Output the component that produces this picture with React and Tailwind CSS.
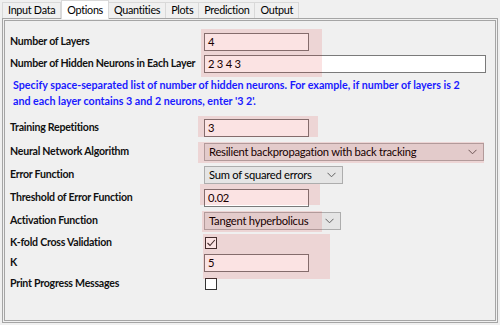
import React from "react";

// WinForms-like options tab with pink attention overlays
const TABS = ["Input Data", "Options", "Quantities", "Plots", "Prediction", "Output"];

const Chevron = () => (
  <svg width="9" height="6" viewBox="0 0 9 6" className="absolute right-[6px] top-1/2 -translate-y-1/2">
    <polyline points="0.5,0.8 4.5,4.8 8.5,0.8" fill="none" stroke="#606060" strokeWidth="1" />
  </svg>
);

const TextBox = ({ value, className }) => (
  <div className={"h-[18px] border border-[#7a7a7a] bg-white pl-[3px] flex items-center text-[11.2px] font-normal tracking-[-0.25px] text-black " + className}>
    {value}
  </div>
);

const Combo = ({ value, className }) => (
  <div className={"relative h-[18px] border border-[#adadad] bg-[#e5e5e5] pl-[4px] flex items-center text-[11.2px] font-normal tracking-[-0.25px] text-black " + className}>
    {value}
    <Chevron />
  </div>
);

const Check = ({ checked }) => (
  <div className="w-[12px] h-[12px] border border-[#333] bg-white flex items-center justify-center">
    {checked && (
      <svg width="10" height="10" viewBox="0 0 10 10">
        <polyline points="1.5,5 4,7.5 8.8,2" fill="none" stroke="#333" strokeWidth="1.1" />
      </svg>
    )}
  </div>
);

export default function App() {
  return (
    <div
      className="relative w-[500px] h-[325px] bg-[#f0f0f0] overflow-hidden"
      style={{ fontFamily: 'Lato, "Liberation Sans", sans-serif' }}
    >
      {/* tab strip */}
      <div className="flex items-end h-[18px] pl-[2px]">
        {TABS.map((t) =>
          t === "Options" ? (
            <div key={t} className="h-[19px] -mb-[1px] z-10 px-[5px] bg-white border border-b-0 border-[#d9d9d9] text-[10.8px] tracking-[-0.3px] text-black flex items-center whitespace-nowrap">
              {t}
            </div>
          ) : (
            <div key={t} className="h-[16px] px-[5px] bg-[#f0f0f0] border border-b-0 border-[#d9d9d9] -ml-[1px] first:ml-0 text-[10.8px] tracking-[-0.3px] text-black flex items-center whitespace-nowrap">
              {t}
            </div>
          )
        )}
      </div>

      {/* panel */}
      <div className="mx-[2px] h-[305px] border-[3px] border-double border-[#a5a5a5] bg-[#f0f0f0] pl-[5px] pt-[12px] text-[10.6px] tracking-[-0.25px] font-bold text-[#111] whitespace-nowrap">
        <div className="flex items-center h-[18px]">
          <div className="w-[194px]">Number of Layers</div>
          <TextBox value="4" className="w-[105px]" />
        </div>
        <div className="flex items-center h-[18px] mt-[4px]">
          <div className="w-[194px]">Number of Hidden Neurons in Each Layer</div>
          <TextBox value="2 3 4 3" className="w-[282px]" />
        </div>
        <div className="mt-[4px] pl-[3px] leading-[16px] text-[#1a1aff] text-[10.7px] tracking-normal">
          Specify space-separated list of number of hidden neurons. For example, if number of layers is 2
          <br />
          and each layer contains 3 and 2 neurons, enter '3 2'.
        </div>
        <div className="flex items-center h-[18px] mt-[10px]">
          <div className="w-[194px]">Training Repetitions</div>
          <TextBox value="3" className="w-[105px]" />
        </div>
        <div className="flex items-center h-[18px] mt-[6px]">
          <div className="w-[194px]">Neural Network Algorithm</div>
          <Combo value="Resilient backpropagation with back tracking" className="w-[280px]" />
        </div>
        <div className="flex items-center h-[18px] mt-[5px]">
          <div className="w-[194px]">Error Function</div>
          <Combo value="Sum of squared errors" className="w-[139px]" />
        </div>
        <div className="flex items-center h-[18px] mt-[5px]">
          <div className="w-[194px]">Threshold of Error Function</div>
          <TextBox value="0.02" className="w-[105px]" />
        </div>
        <div className="flex items-center h-[18px] mt-[5px]">
          <div className="w-[194px]">Activation Function</div>
          <Combo value="Tangent hyperbolicus" className="w-[137px]" />
        </div>
        <div className="flex items-center h-[15px] mt-[5px]">
          <div className="w-[195px]">K-fold Cross Validation</div>
          <Check checked />
        </div>
        <div className="flex items-center h-[18px] mt-[4px]">
          <div className="w-[194px]">K</div>
          <TextBox value="5" className="w-[105px]" />
        </div>
        <div className="flex items-center h-[14px] mt-[5px]">
          <div className="w-[195px]">Print Progress Messages</div>
          <Check />
        </div>
      </div>

      {/* highlight overlays */}
      <div className="absolute left-[201px] top-[29px] w-[121px] h-[48px] bg-[rgba(220,0,0,0.11)] pointer-events-none" />
      <div className="absolute left-[198px] top-[116px] w-[120px] h-[21px] bg-[rgba(220,0,0,0.11)] pointer-events-none" />
      <div className="absolute left-[198px] top-[142px] w-[286px] h-[21px] bg-[rgba(220,0,0,0.11)] pointer-events-none" />
      <div className="absolute left-[200px] top-[184px] w-[120px] h-[21px] bg-[rgba(220,0,0,0.11)] pointer-events-none" />
      <div className="absolute left-[202px] top-[211px] w-[120px] h-[21px] bg-[rgba(220,0,0,0.11)] pointer-events-none" />
      <div className="absolute left-[203px] top-[234px] w-[127px] h-[45px] bg-[rgba(220,0,0,0.11)] pointer-events-none" />
    </div>
  );
}
